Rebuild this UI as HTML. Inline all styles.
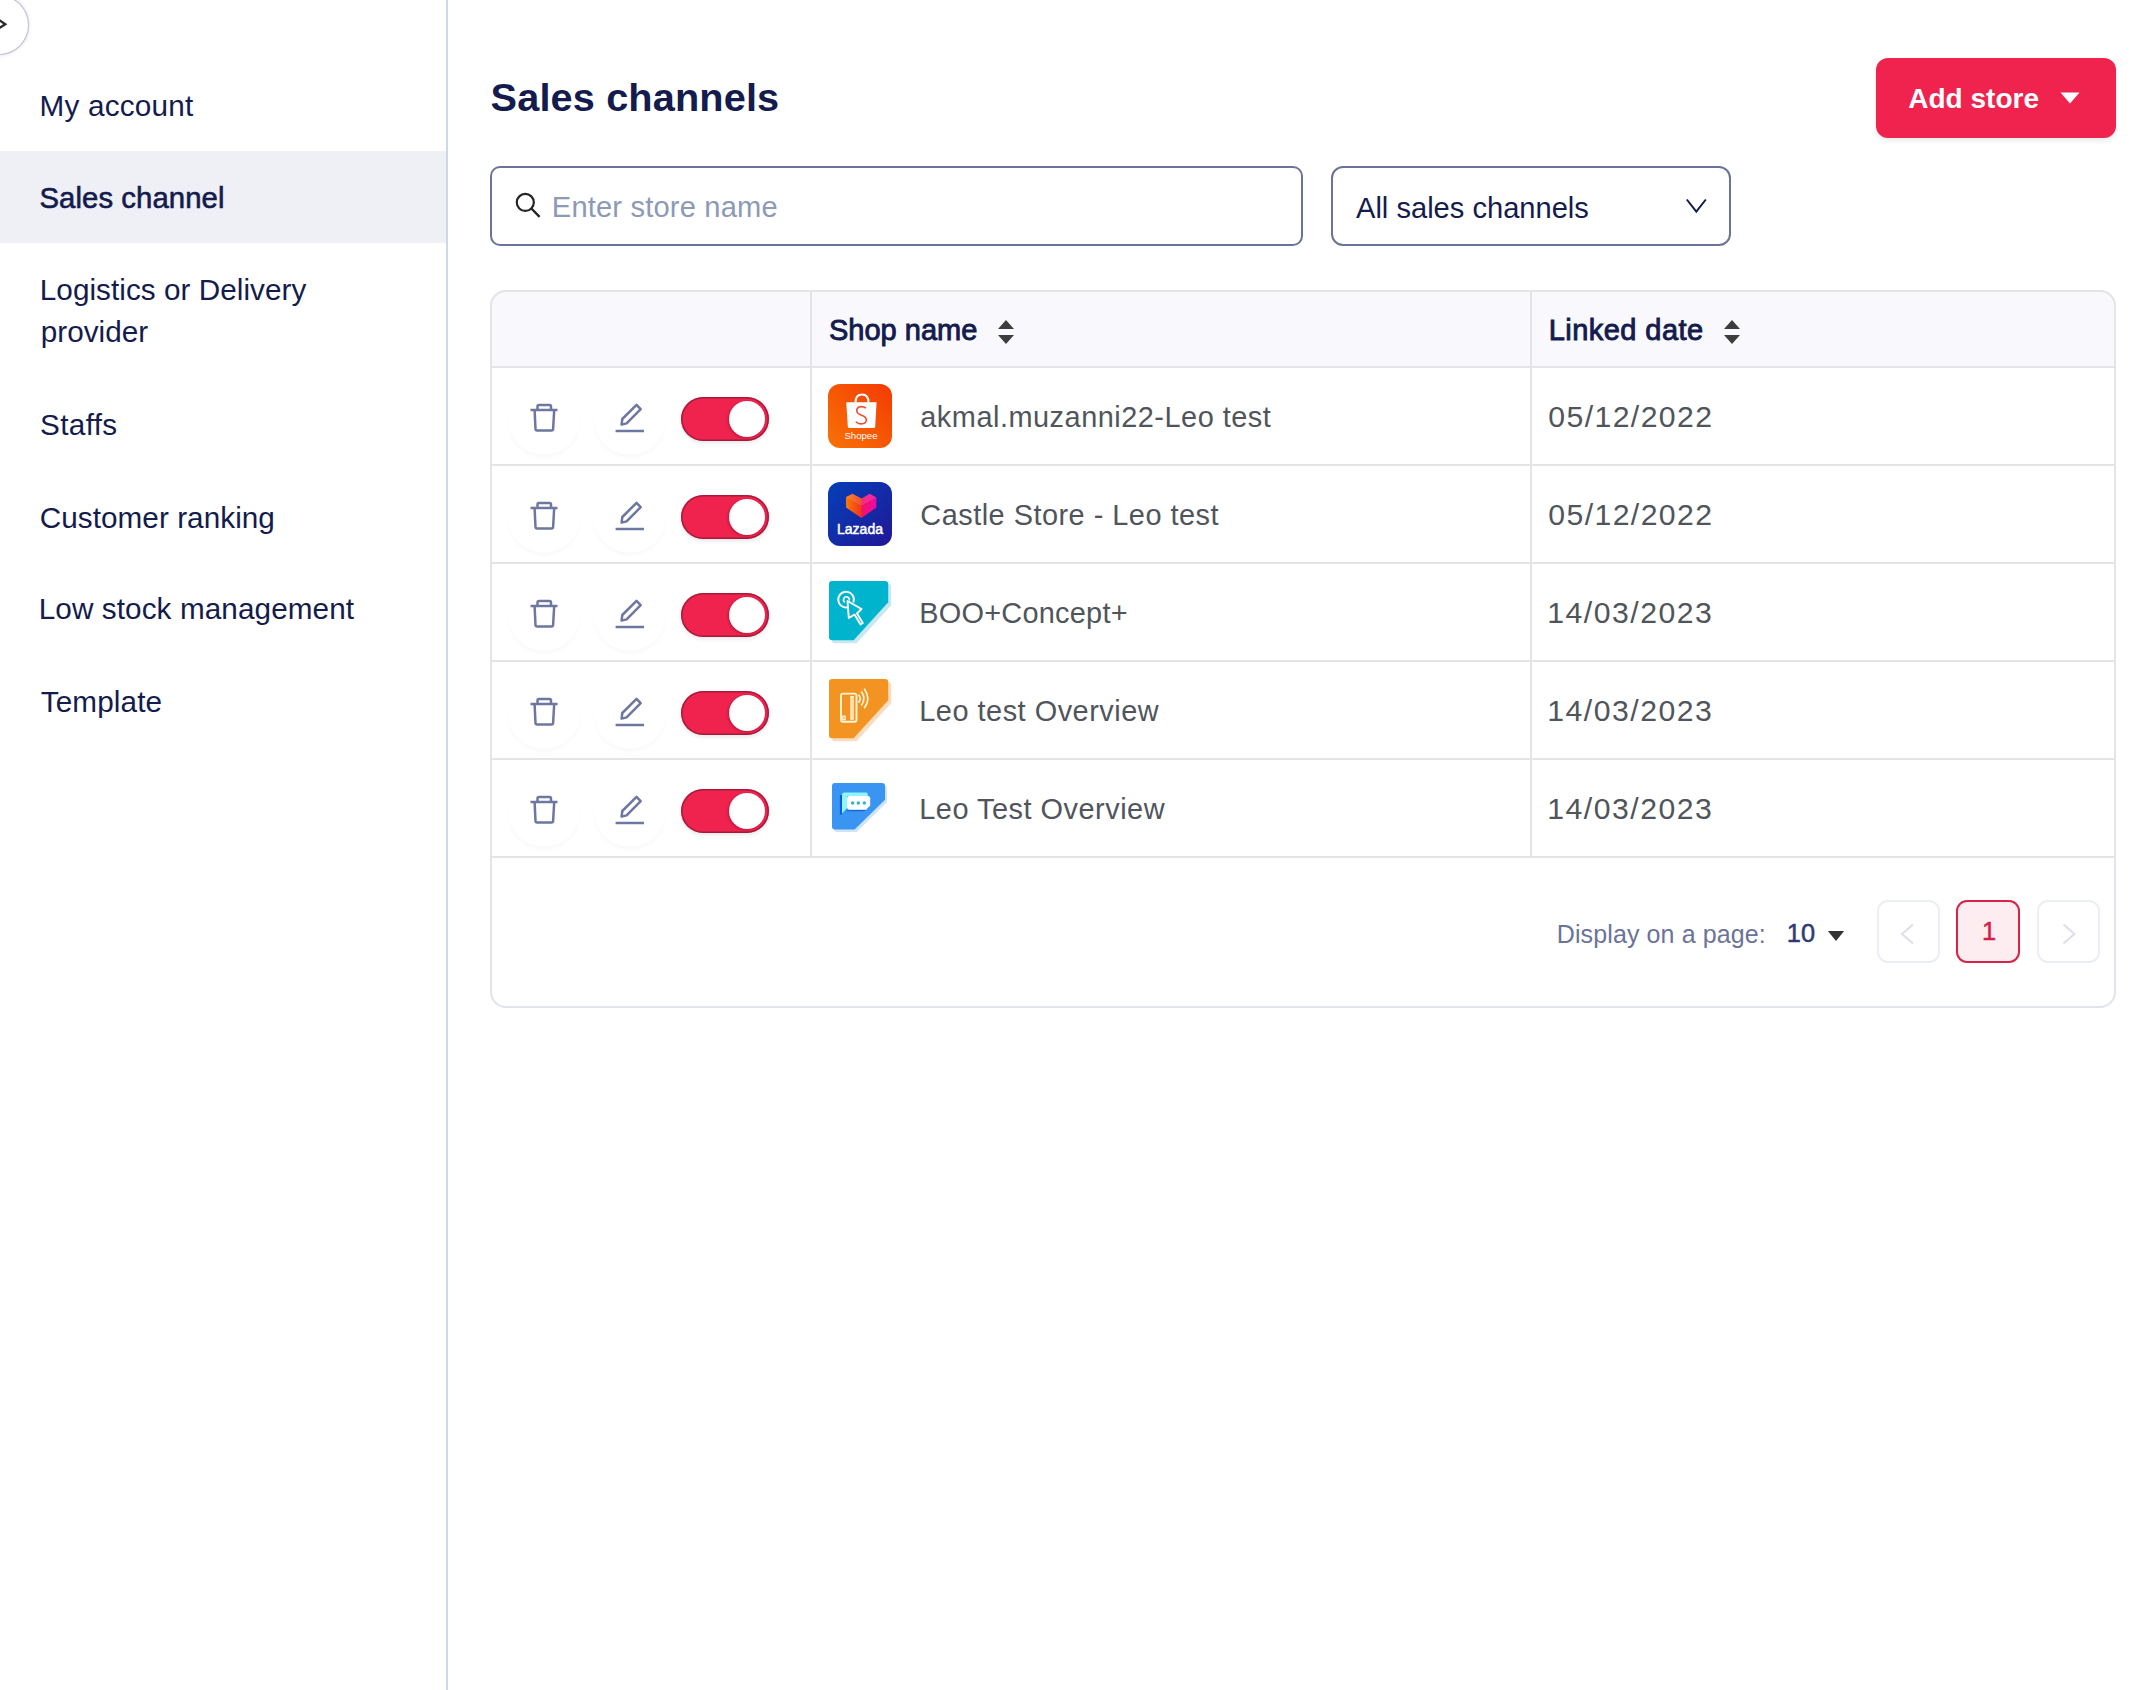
<!DOCTYPE html>
<html><head><meta charset="utf-8"><title>Sales channels</title>
<style>
html,body{margin:0;padding:0;background:#fff;}
body{width:2156px;height:1690px;position:relative;overflow:hidden;font-family:"Liberation Sans",sans-serif;}
.t{position:absolute;white-space:nowrap;}
</style></head><body>
<div style="position:absolute;left:0;top:151px;width:446px;height:92px;background:#eff0f6"></div>
<div style="position:absolute;left:446px;top:0;width:2px;height:1690px;background:#d0d7e6"></div>
<div style="position:absolute;left:-30.3px;top:-4.5px;width:58px;height:58px;border-radius:50%;background:#fff;box-shadow:0 0 0 1px rgba(185,186,205,0.9), 0 0 3px 1.5px rgba(160,160,195,0.3)"></div>
<svg style="position:absolute;left:0;top:0" width="20" height="40"><path d="M-2 19.3 L5.3 24.2 L-2 29" fill="none" stroke="#2a2a2a" stroke-width="2.3"/></svg>
<div class="t" style="left:39.60px;top:87.14px;font-size:29.70px;line-height:37.12px;color:#141b4d;letter-spacing:0.200px;">My account</div>
<div class="t" style="left:39.50px;top:179.53px;font-size:29.30px;line-height:36.62px;color:#141b4d;letter-spacing:0.075px;-webkit-text-stroke:0.60px #141b4d;">Sales channel</div>
<div class="t" style="left:39.80px;top:271.04px;font-size:29.70px;line-height:37.12px;color:#141b4d;letter-spacing:0.045px;">Logistics or Delivery</div>
<div class="t" style="left:40.80px;top:313.24px;font-size:29.70px;line-height:37.12px;color:#141b4d;letter-spacing:0.000px;">provider</div>
<div class="t" style="left:40.00px;top:405.94px;font-size:29.70px;line-height:37.12px;color:#141b4d;letter-spacing:0.360px;">Staffs</div>
<div class="t" style="left:39.70px;top:498.74px;font-size:29.70px;line-height:37.12px;color:#141b4d;letter-spacing:0.060px;">Customer ranking</div>
<div class="t" style="left:38.70px;top:590.34px;font-size:29.70px;line-height:37.12px;color:#141b4d;letter-spacing:0.095px;">Low stock management</div>
<div class="t" style="left:40.70px;top:682.74px;font-size:29.70px;line-height:37.12px;color:#141b4d;letter-spacing:0.129px;">Template</div>
<div class="t" style="left:490.60px;top:73.42px;font-size:39.70px;line-height:49.62px;color:#141b4d;font-weight:700;letter-spacing:0.138px;">Sales channels</div>
<div style="position:absolute;left:1876px;top:58px;width:240px;height:80px;border-radius:12px;background:#f0234f;box-shadow:0 3px 5px rgba(0,0,0,0.08)"></div>
<div class="t" style="left:1908.30px;top:80.59px;font-size:28.00px;line-height:35.00px;color:#fff;font-weight:700;letter-spacing:0.000px;">Add store</div>
<svg style="position:absolute;left:2060px;top:92px" width="20" height="12"><path d="M0.5 0.5 L19.5 0.5 L10 11.5 Z" fill="#fff"/></svg>
<div style="position:absolute;left:490px;top:166px;width:813px;height:80px;box-sizing:border-box;border:2px solid #6b7399;border-radius:10px;background:#fff"></div>
<svg style="position:absolute;left:512px;top:190px" width="32" height="32"><circle cx="13.3" cy="12.4" r="8.5" fill="none" stroke="#252525" stroke-width="2.2"/><path d="M19.4 18.5 L27.6 26.9" stroke="#252525" stroke-width="2.4" stroke-linecap="butt"/></svg>
<div class="t" style="left:551.80px;top:188.62px;font-size:29.10px;line-height:36.38px;color:#8c9ab6;letter-spacing:0.180px;">Enter store name</div>
<div style="position:absolute;left:1331px;top:166px;width:400px;height:80px;box-sizing:border-box;border:2px solid #6b7399;border-radius:12px;background:#fff"></div>
<div class="t" style="left:1356.00px;top:190.02px;font-size:29.10px;line-height:36.38px;color:#141b4d;letter-spacing:0.000px;">All sales channels</div>
<svg style="position:absolute;left:1684px;top:196px" width="26" height="20"><path d="M2.8 3.5 L12.3 15.6 L21.8 3.5" fill="none" stroke="#141b4d" stroke-width="2"/></svg>
<div style="position:absolute;left:490px;top:290px;width:1626px;height:718px;box-sizing:border-box;border:2px solid #e2e4eb;border-radius:16px;background:#fff;overflow:hidden"><div style="position:absolute;left:0;top:0;width:1622px;height:76px;background:#f9f9fd"></div></div>
<div style="position:absolute;left:490px;top:290px;width:1626px;height:568px;box-sizing:border-box;border:2px solid #e5e5e7;border-bottom:none;border-radius:16px 16px 0 0"></div>
<div style="position:absolute;left:492px;top:366px;width:1622px;height:2px;background:#e4e4e7"></div>
<div style="position:absolute;left:492px;top:464px;width:1622px;height:2px;background:#e4e4e7"></div>
<div style="position:absolute;left:492px;top:562px;width:1622px;height:2px;background:#e4e4e7"></div>
<div style="position:absolute;left:492px;top:660px;width:1622px;height:2px;background:#e4e4e7"></div>
<div style="position:absolute;left:492px;top:758px;width:1622px;height:2px;background:#e4e4e7"></div>
<div style="position:absolute;left:492px;top:856px;width:1622px;height:2px;background:#e4e4e7"></div>
<div style="position:absolute;left:810px;top:292px;width:2px;height:566px;background:#e4e4e7"></div>
<div style="position:absolute;left:1530px;top:292px;width:2px;height:566px;background:#e4e4e7"></div>
<div class="t" style="left:829.00px;top:311.72px;font-size:29.00px;line-height:36.25px;color:#141b4d;letter-spacing:0.000px;-webkit-text-stroke:0.90px #141b4d;">Shop name</div>
<div class="t" style="left:1548.70px;top:311.72px;font-size:29.00px;line-height:36.25px;color:#141b4d;letter-spacing:0.450px;-webkit-text-stroke:0.90px #141b4d;">Linked date</div>
<svg style="position:absolute;left:998.0px;top:319px" width="18" height="27"><path d="M0 10 L16 10 L8 1 Z M0 16 L16 16 L8 25 Z" fill="#3d3d3d"/></svg>
<svg style="position:absolute;left:1724.0px;top:319px" width="18" height="27"><path d="M0 10 L16 10 L8 1 Z M0 16 L16 16 L8 25 Z" fill="#3d3d3d"/></svg>
<div style="position:absolute;left:508px;top:383px;width:72px;height:72px;border-radius:50%;box-shadow:0 3px 4px -1px rgba(40,40,60,0.035)"></div>
<div style="position:absolute;left:594px;top:383px;width:72px;height:72px;border-radius:50%;box-shadow:0 3px 4px -1px rgba(40,40,60,0.035)"></div>
<svg style="position:absolute;left:0;top:388px" width="700" height="80" viewBox="0 388 700 80"><g fill="none" stroke="#6e779f" stroke-width="2.5" stroke-linejoin="round"><path d="M530.5 410 H557.5"/><path d="M537.5 410 V406.5 Q537.5 405 539 405 H549.5 Q551 405 551 406.5 V410"/><path d="M534.6 410 L535.5 429 Q535.6 430.6 537 430.6 H551.5 Q553 430.6 553.1 429 L554.2 410"/><path d="M615.6 431 H644"/><path d="M621.6 424.6 L622.3 419 L636.5 404.9 L640.7 409.1 L626.6 423.4 Z"/></g></svg>
<div style="position:absolute;left:681px;top:397px;width:88px;height:44px;border-radius:22px;background:#f0234f;box-shadow:inset 0 0 0 1.5px rgba(120,20,45,0.6), 0 2px 4px rgba(0,0,0,0.10)"></div>
<div style="position:absolute;left:729px;top:401px;width:36px;height:36px;border-radius:50%;background:#fff;box-shadow:-1px 1px 3px rgba(80,0,20,0.35)"></div>
<svg style="position:absolute;left:828px;top:384px" width="64" height="64" viewBox="0 0 64 64"><defs><linearGradient id="gs" x1="0" y1="1" x2="1" y2="0"><stop offset="0" stop-color="#f87306"/><stop offset="1" stop-color="#f43a03"/></linearGradient></defs><rect x="0" y="0" width="64" height="64" rx="12" fill="url(#gs)"/><path d="M27.5 18.5 Q27.5 10.5 34 10.5 Q40.5 10.5 40.5 18.5" fill="none" stroke="#fff" stroke-width="2"/><path d="M18.3 18.3 L48.6 18.3 L47.2 42.5 Q47 44 45.5 44 L21.5 44 Q20 44 19.8 42.5 Z" fill="#fff"/><path d="M38 24.2 Q35.5 22.4 33 22.6 Q28.6 23 28.8 26.8 Q29 29.8 33.5 31.2 Q38.5 32.8 38.3 36.3 Q38 39.8 33.2 39.9 Q30 40 27.8 37.8" fill="none" stroke="#ee4d2d" stroke-width="1.6"/><text x="33" y="55" text-anchor="middle" font-family="Liberation Sans" font-size="9.6" fill="#fff">Shopee</text></svg>
<div class="t" style="left:920.30px;top:399.02px;font-size:28.90px;line-height:36.12px;color:#50555c;letter-spacing:0.509px;">akmal.muzanni22-Leo test</div>
<div class="t" style="left:1548.30px;top:398.16px;font-size:30.20px;line-height:37.75px;color:#50555c;letter-spacing:1.400px;">05/12/2022</div>
<div style="position:absolute;left:508px;top:481px;width:72px;height:72px;border-radius:50%;box-shadow:0 3px 4px -1px rgba(40,40,60,0.035)"></div>
<div style="position:absolute;left:594px;top:481px;width:72px;height:72px;border-radius:50%;box-shadow:0 3px 4px -1px rgba(40,40,60,0.035)"></div>
<svg style="position:absolute;left:0;top:486px" width="700" height="80" viewBox="0 388 700 80"><g fill="none" stroke="#6e779f" stroke-width="2.5" stroke-linejoin="round"><path d="M530.5 410 H557.5"/><path d="M537.5 410 V406.5 Q537.5 405 539 405 H549.5 Q551 405 551 406.5 V410"/><path d="M534.6 410 L535.5 429 Q535.6 430.6 537 430.6 H551.5 Q553 430.6 553.1 429 L554.2 410"/><path d="M615.6 431 H644"/><path d="M621.6 424.6 L622.3 419 L636.5 404.9 L640.7 409.1 L626.6 423.4 Z"/></g></svg>
<div style="position:absolute;left:681px;top:495px;width:88px;height:44px;border-radius:22px;background:#f0234f;box-shadow:inset 0 0 0 1.5px rgba(120,20,45,0.6), 0 2px 4px rgba(0,0,0,0.10)"></div>
<div style="position:absolute;left:729px;top:499px;width:36px;height:36px;border-radius:50%;background:#fff;box-shadow:-1px 1px 3px rgba(80,0,20,0.35)"></div>
<svg style="position:absolute;left:828px;top:482px" width="64" height="64" viewBox="0 0 64 64"><defs><linearGradient id="gl" x1="0" y1="0" x2="1" y2="1"><stop offset="0" stop-color="#0540b9"/><stop offset="1" stop-color="#211796"/></linearGradient><linearGradient id="gh" x1="0" y1="0" x2="1" y2="0"><stop offset="0" stop-color="#f57a05"/><stop offset="0.5" stop-color="#f2361e"/><stop offset="0.52" stop-color="#f01462"/><stop offset="1" stop-color="#ee08a8"/></linearGradient></defs><rect x="0" y="0" width="64" height="64" rx="12" fill="url(#gl)"/><path d="M18 15 L24.5 11.8 L33.5 16.5 L41.8 11.8 L48.3 15.5 L48.3 25.5 L33.5 36 L18 25.5 Z" fill="url(#gh)"/><path d="M18 15 L24.5 11.8 L33.5 16.5 L41.8 11.8 L48.3 15.5 L33.5 23.5 Z" fill="#ffffff" opacity="0.12"/><text x="32" y="52.3" text-anchor="middle" font-family="Liberation Sans" font-size="14" stroke="#fff" stroke-width="0.5" fill="#fff">Lazada</text></svg>
<div class="t" style="left:920.30px;top:497.02px;font-size:28.90px;line-height:36.12px;color:#50555c;letter-spacing:0.491px;">Castle Store - Leo test</div>
<div class="t" style="left:1548.30px;top:496.16px;font-size:30.20px;line-height:37.75px;color:#50555c;letter-spacing:1.400px;">05/12/2022</div>
<div style="position:absolute;left:508px;top:579px;width:72px;height:72px;border-radius:50%;box-shadow:0 3px 4px -1px rgba(40,40,60,0.035)"></div>
<div style="position:absolute;left:594px;top:579px;width:72px;height:72px;border-radius:50%;box-shadow:0 3px 4px -1px rgba(40,40,60,0.035)"></div>
<svg style="position:absolute;left:0;top:584px" width="700" height="80" viewBox="0 388 700 80"><g fill="none" stroke="#6e779f" stroke-width="2.5" stroke-linejoin="round"><path d="M530.5 410 H557.5"/><path d="M537.5 410 V406.5 Q537.5 405 539 405 H549.5 Q551 405 551 406.5 V410"/><path d="M534.6 410 L535.5 429 Q535.6 430.6 537 430.6 H551.5 Q553 430.6 553.1 429 L554.2 410"/><path d="M615.6 431 H644"/><path d="M621.6 424.6 L622.3 419 L636.5 404.9 L640.7 409.1 L626.6 423.4 Z"/></g></svg>
<div style="position:absolute;left:681px;top:593px;width:88px;height:44px;border-radius:22px;background:#f0234f;box-shadow:inset 0 0 0 1.5px rgba(120,20,45,0.6), 0 2px 4px rgba(0,0,0,0.10)"></div>
<div style="position:absolute;left:729px;top:597px;width:36px;height:36px;border-radius:50%;background:#fff;box-shadow:-1px 1px 3px rgba(80,0,20,0.35)"></div>
<svg style="position:absolute;left:829px;top:580.5px" width="64" height="64" viewBox="0 0 64 64"><path transform="translate(3,3)" d="M3 0 H56.2 Q59.2 0 59.2 3 V21.3 L24.6 59.2 H3 Q0 59.2 0 56.2 V3 Q0 0 3 0 Z" fill="#c7e8f1"/><path d="M3 0 H56.2 Q59.2 0 59.2 3 V21.3 L24.6 59.2 H3 Q0 59.2 0 56.2 V3 Q0 0 3 0 Z" fill="#00b4cd"/><g fill="none" stroke="#fff" stroke-width="1.9" stroke-linejoin="round"><path d="M19.2 26.1 A7.8 7.8 0 1 1 24.3 21.5"/><path d="M16 21.3 A2.9 2.9 0 1 1 20.2 19.6" stroke-width="1.6"/><path d="M18.5 20 L19.8 37 L25.5 33.5 L31.5 43.5 L33.8 42 L28 32.5 L32.5 28 Z"/></g></svg>
<div class="t" style="left:919.30px;top:595.02px;font-size:28.90px;line-height:36.12px;color:#50555c;letter-spacing:0.245px;">BOO+Concept+</div>
<div class="t" style="left:1547.30px;top:594.16px;font-size:30.20px;line-height:37.75px;color:#50555c;letter-spacing:1.500px;">14/03/2023</div>
<div style="position:absolute;left:508px;top:677px;width:72px;height:72px;border-radius:50%;box-shadow:0 3px 4px -1px rgba(40,40,60,0.035)"></div>
<div style="position:absolute;left:594px;top:677px;width:72px;height:72px;border-radius:50%;box-shadow:0 3px 4px -1px rgba(40,40,60,0.035)"></div>
<svg style="position:absolute;left:0;top:682px" width="700" height="80" viewBox="0 388 700 80"><g fill="none" stroke="#6e779f" stroke-width="2.5" stroke-linejoin="round"><path d="M530.5 410 H557.5"/><path d="M537.5 410 V406.5 Q537.5 405 539 405 H549.5 Q551 405 551 406.5 V410"/><path d="M534.6 410 L535.5 429 Q535.6 430.6 537 430.6 H551.5 Q553 430.6 553.1 429 L554.2 410"/><path d="M615.6 431 H644"/><path d="M621.6 424.6 L622.3 419 L636.5 404.9 L640.7 409.1 L626.6 423.4 Z"/></g></svg>
<div style="position:absolute;left:681px;top:691px;width:88px;height:44px;border-radius:22px;background:#f0234f;box-shadow:inset 0 0 0 1.5px rgba(120,20,45,0.6), 0 2px 4px rgba(0,0,0,0.10)"></div>
<div style="position:absolute;left:729px;top:695px;width:36px;height:36px;border-radius:50%;background:#fff;box-shadow:-1px 1px 3px rgba(80,0,20,0.35)"></div>
<svg style="position:absolute;left:829px;top:678.5px" width="64" height="64" viewBox="0 0 64 64"><path transform="translate(3,3)" d="M3 0 H56.2 Q59.2 0 59.2 3 V21.3 L24.6 59.2 H3 Q0 59.2 0 56.2 V3 Q0 0 3 0 Z" fill="#fbdcc0"/><path d="M3 0 H56.2 Q59.2 0 59.2 3 V21.3 L24.6 59.2 H3 Q0 59.2 0 56.2 V3 Q0 0 3 0 Z" fill="#f39321"/><g fill="none" stroke="#fff6d8" stroke-width="1.9"><rect x="12" y="14.6" width="15.5" height="28.1" rx="2"/><path d="M22.1 17.8 V40 H24 V17.8 Z" stroke-width="1.5"/><rect x="13.9" y="37.2" width="2.2" height="3.4" stroke-width="1.3"/><path d="M29.6 15.8 Q32.8 19.7 29.6 23.6" stroke-width="1.7"/><path d="M32.3 12.5 Q37.6 19.5 32.3 26.4" stroke-width="1.7"/><path d="M35.2 9.7 Q42.4 19.5 35.2 29.2" stroke-width="1.7"/></g></svg>
<div class="t" style="left:919.30px;top:693.02px;font-size:28.90px;line-height:36.12px;color:#50555c;letter-spacing:0.506px;">Leo test Overview</div>
<div class="t" style="left:1547.30px;top:692.16px;font-size:30.20px;line-height:37.75px;color:#50555c;letter-spacing:1.500px;">14/03/2023</div>
<div style="position:absolute;left:508px;top:775px;width:72px;height:72px;border-radius:50%;box-shadow:0 3px 4px -1px rgba(40,40,60,0.035)"></div>
<div style="position:absolute;left:594px;top:775px;width:72px;height:72px;border-radius:50%;box-shadow:0 3px 4px -1px rgba(40,40,60,0.035)"></div>
<svg style="position:absolute;left:0;top:780px" width="700" height="80" viewBox="0 388 700 80"><g fill="none" stroke="#6e779f" stroke-width="2.5" stroke-linejoin="round"><path d="M530.5 410 H557.5"/><path d="M537.5 410 V406.5 Q537.5 405 539 405 H549.5 Q551 405 551 406.5 V410"/><path d="M534.6 410 L535.5 429 Q535.6 430.6 537 430.6 H551.5 Q553 430.6 553.1 429 L554.2 410"/><path d="M615.6 431 H644"/><path d="M621.6 424.6 L622.3 419 L636.5 404.9 L640.7 409.1 L626.6 423.4 Z"/></g></svg>
<div style="position:absolute;left:681px;top:789px;width:88px;height:44px;border-radius:22px;background:#f0234f;box-shadow:inset 0 0 0 1.5px rgba(120,20,45,0.6), 0 2px 4px rgba(0,0,0,0.10)"></div>
<div style="position:absolute;left:729px;top:793px;width:36px;height:36px;border-radius:50%;background:#fff;box-shadow:-1px 1px 3px rgba(80,0,20,0.35)"></div>
<svg style="position:absolute;left:832px;top:783.0px" width="60" height="54" viewBox="0 0 60 54"><path transform="translate(2,2.5)" d="M3 0 H50 Q53 0 53 3 V16.7 L22.6 46.5 H3 Q0 46.5 0 43.5 V3 Q0 0 3 0 Z" fill="#cfe3fb"/><path d="M3 0 H50 Q53 0 53 3 V16.7 L22.6 46.5 H3 Q0 46.5 0 43.5 V3 Q0 0 3 0 Z" fill="#3994f2"/><path d="M7.9 12 H10.2 V31.6 H7.9 Z" fill="#0b5fd6"/><path d="M10 11.8 Q10 9.4 12.4 9.4 H34 Q35.8 9.4 35.8 11.5 V12.9 H15 V25 L10 30.5 Z" fill="#8ef6fb"/><path d="M15 27.2 V28.3 H32.5 L34 26.7 Z" fill="#0b5fd6" opacity="0.85"/><path d="M15 15.3 Q15 12.9 17.4 12.9 H35.8 Q38.2 12.9 38.2 15.3 V22.6 L34 26.7 H17.4 Q15 26.7 15 24.3 Z" fill="#fff"/><circle cx="20.7" cy="20" r="1.7" fill="#2bb5c8"/><circle cx="26.3" cy="20" r="1.7" fill="#2bb5c8"/><circle cx="32.3" cy="20" r="1.7" fill="#2bb5c8"/></svg>
<div class="t" style="left:919.30px;top:791.02px;font-size:28.90px;line-height:36.12px;color:#50555c;letter-spacing:0.506px;">Leo Test Overview</div>
<div class="t" style="left:1547.30px;top:790.16px;font-size:30.20px;line-height:37.75px;color:#50555c;letter-spacing:1.500px;">14/03/2023</div>
<div class="t" style="left:1556.80px;top:919.11px;font-size:25.00px;line-height:31.25px;color:#6b7399;letter-spacing:0.106px;">Display on a page:</div>
<div class="t" style="left:1786.80px;top:918.22px;font-size:25.40px;line-height:31.75px;color:#2f3a73;letter-spacing:0.000px;-webkit-text-stroke:0.50px #2f3a73;">10</div>
<svg style="position:absolute;left:1827px;top:930px" width="18" height="12"><path d="M0.9 1 L17.1 1 L9 11 Z" fill="#333"/></svg>
<div style="position:absolute;left:1876.5px;top:900px;width:63px;height:63px;box-sizing:border-box;border:2px solid #eceef5;border-radius:11px"></div>
<div style="position:absolute;left:1956px;top:900px;width:63.5px;height:63px;box-sizing:border-box;border:2.5px solid #d8234b;border-radius:11px;background:#fdedf1"></div>
<div style="position:absolute;left:2036.5px;top:900px;width:63px;height:63px;box-sizing:border-box;border:2px solid #eceef5;border-radius:11px"></div>
<svg style="position:absolute;left:1898px;top:922px" width="20" height="24"><path d="M15 2.5 L4 12 L15 21.5" fill="none" stroke="#dcdfe8" stroke-width="2"/></svg>
<svg style="position:absolute;left:2059px;top:922px" width="20" height="24"><path d="M4.5 2.5 L15.5 12 L4.5 21.5" fill="none" stroke="#dcdfe8" stroke-width="2"/></svg>
<div class="t" style="left:1981.90px;top:915.52px;font-size:25.40px;line-height:31.75px;color:#d41f48;letter-spacing:0.000px;-webkit-text-stroke:0.50px #d41f48;">1</div>
</body></html>
